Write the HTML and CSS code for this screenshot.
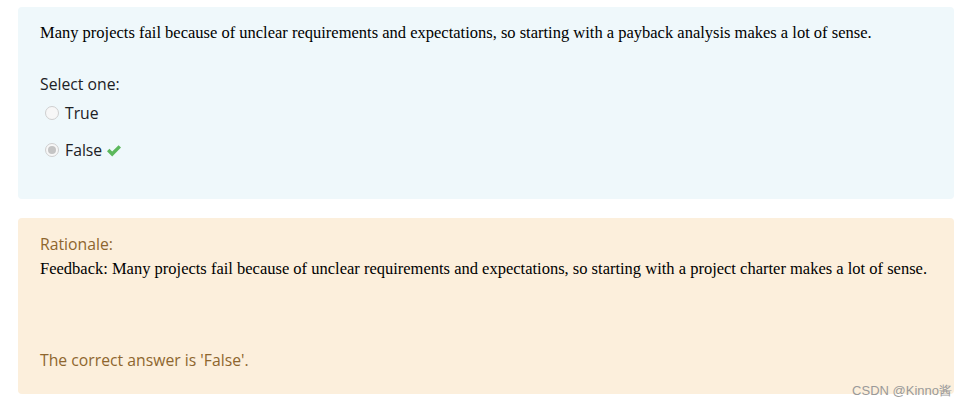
FILE: index.html
```html
<!DOCTYPE html>
<html>
<head>
<meta charset="utf-8">
<link rel="stylesheet" href="styles.css">
</head>
<body>
<div class="page">
  <div class="formulation">
    <div class="qtext">Many projects fail because of unclear requirements and expectations, so starting with a payback analysis makes a lot of sense.</div>
    <div class="prompt">Select one:</div>
    <div class="answers">
      <div class="answer">
        <span class="radio"></span>
        <span class="label">True</span>
      </div>
      <div class="answer">
        <span class="radio checked"></span>
        <span class="label">False</span>
        <svg class="tick" width="16" height="13" viewBox="0 0 16 13"><path d="M1 7.2 L3.4 4.8 L6.2 7.6 L12.6 1.2 L15 3.6 L6.2 12.4 Z" fill="#5cb85c"/></svg>
      </div>
    </div>
  </div>
  <div class="outcome">
    <div class="rationale">Rationale:</div>
    <div class="feedback">Feedback: Many projects fail because of unclear requirements and expectations, so starting with a project charter makes a lot of sense.</div>
    <div class="rightanswer">The correct answer is 'False'.</div>
  </div>
  <div class="watermark">CSDN @Kinno酱</div>
</div>
</body>
</html>
```

FILE: styles.css
```css
html, body {
  margin: 0;
  padding: 0;
  background: #ffffff;
}
.page {
  position: relative;
  width: 968px;
  height: 408px;
  padding: 7px 14px 0 18px;
  box-sizing: border-box;
  display: flex;
  flex-direction: column;
  gap: 19px;
}
.formulation {
  background: #eff8fb;
  border-radius: 4px;
  height: 192px;
  box-sizing: border-box;
  padding: 16px 22px 0 22px;
}
.qtext {
  font-family: "Liberation Serif", "Times New Roman", serif;
  font-size: 16.5px;
  line-height: 20px;
  color: #000;
}
.prompt {
  font-family: "Open Sans", "Noto Sans", sans-serif;
  font-size: 15.75px;
  line-height: 20px;
  color: #1d2125;
  margin-top: 31px;
}
.answers {
  display: flex;
  flex-direction: column;
  gap: 17px;
  margin-top: 9px;
  padding-left: 5px;
}
.answer {
  display: flex;
  align-items: center;
  height: 20px;
  font-family: "Open Sans", "Noto Sans", sans-serif;
  font-size: 15.75px;
  color: #1d2125;
}
.radio {
  width: 12px;
  height: 12px;
  border: 1px solid #cfcfcf;
  border-radius: 50%;
  background: #f7f7f7;
  box-sizing: content-box;
  position: relative;
  margin-right: 6px;
}
.radio.checked::after {
  content: "";
  position: absolute;
  left: 2px;
  top: 2px;
  width: 8px;
  height: 8px;
  border-radius: 50%;
  background: #c4c4c4;
}
.tick {
  margin-left: 4px;
}
.outcome {
  background: #fcefdc;
  border-radius: 4px;
  height: 176px;
  box-sizing: border-box;
  padding: 16px 22px 0 22px;
}
.rationale {
  font-family: "Open Sans", "Noto Sans", sans-serif;
  font-size: 15.75px;
  line-height: 20px;
  color: #8e662e;
}
.feedback {
  font-family: "Liberation Serif", "Times New Roman", serif;
  font-size: 16.5px;
  line-height: 20px;
  color: #000;
  margin-top: 5px;
}
.rightanswer {
  font-family: "Open Sans", "Noto Sans", sans-serif;
  font-size: 15.75px;
  line-height: 20px;
  color: #8e662e;
  margin-top: 71px;
}
.watermark {
  position: absolute;
  right: 16px;
  top: 383px;
  font-family: "Liberation Sans", Arial, sans-serif;
  font-size: 13px;
  line-height: 16px;
  color: #9a9a9a;
}
```
